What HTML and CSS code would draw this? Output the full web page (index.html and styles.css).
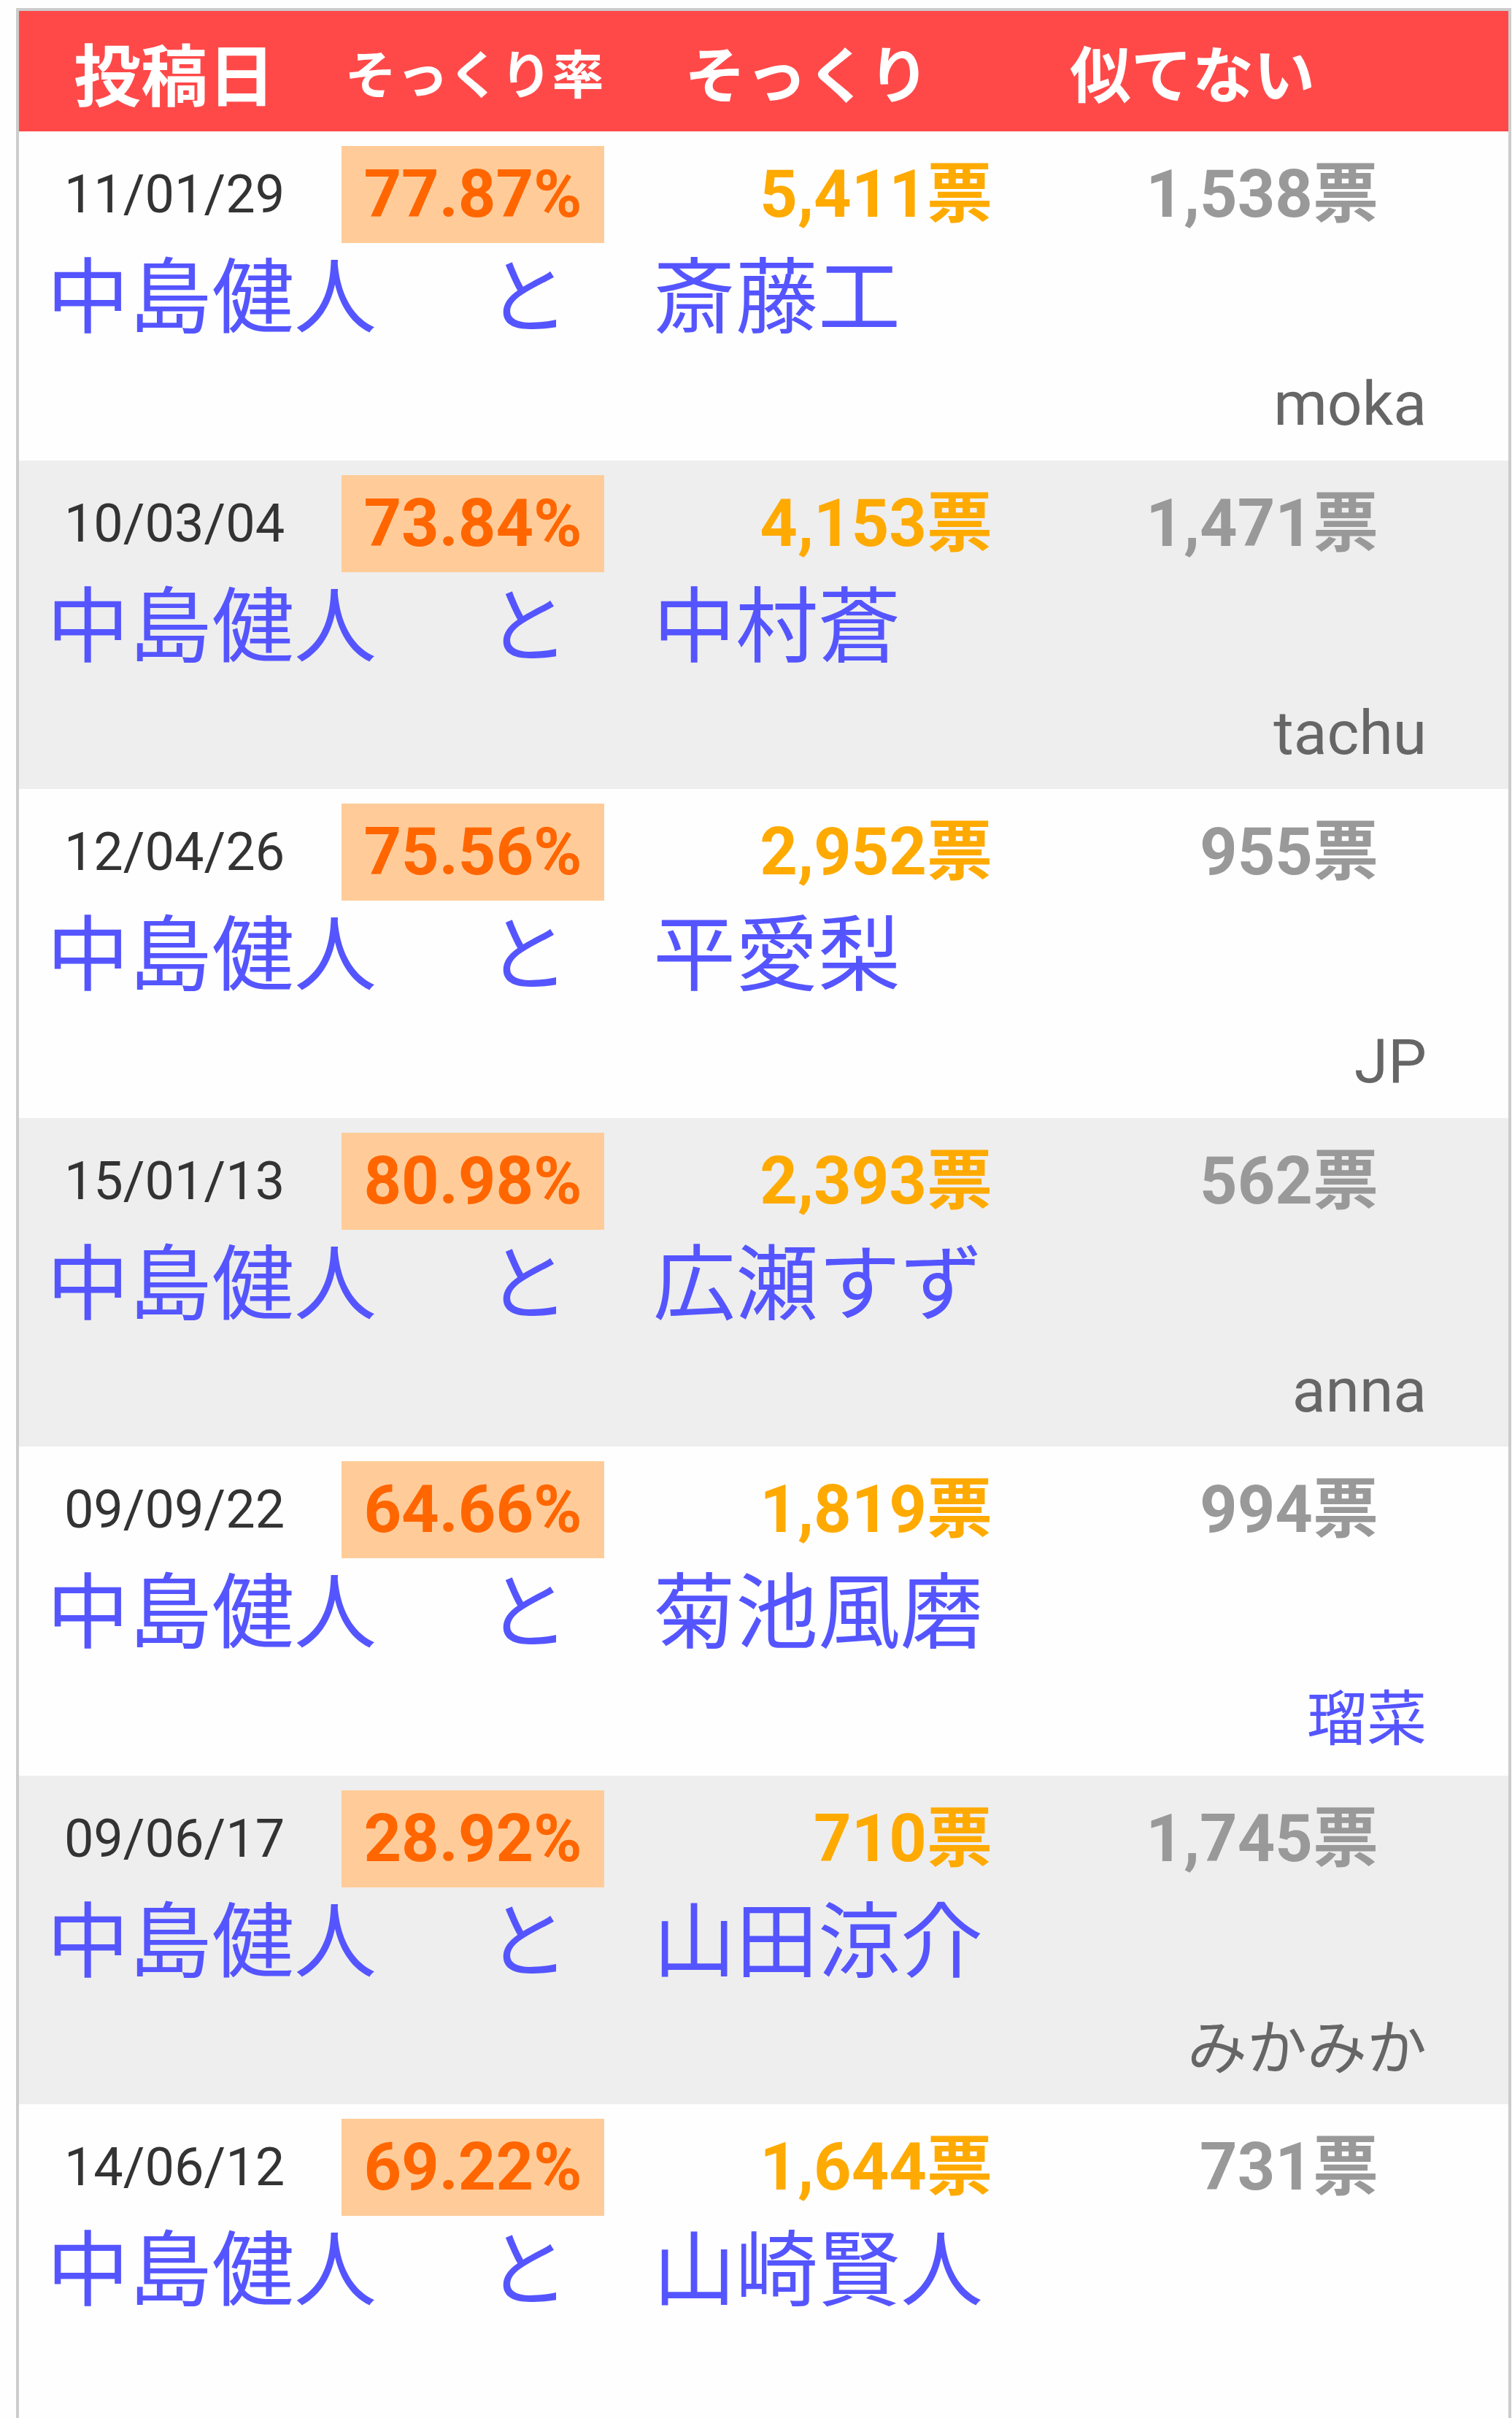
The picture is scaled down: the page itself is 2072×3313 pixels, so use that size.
FILE: index.html
```html
<!DOCTYPE html>
<html>
<head>
    <meta charset="utf-8">
    <title>そっくりランキング</title>
    <link rel="stylesheet" href="styles.css">
</head>
<body>
    <div class="board">
        <div class="head">
            <div class="h-date">投稿日</div>
            <div class="h-rate">そっくり率</div>
            <div class="h-yes">そっくり</div>
            <div class="h-no">似てない</div>
        </div>

        <div class="row">
            <div class="stats">
                <div class="date">11/01/29</div>
                <div class="rate">77.87%</div>
                <div class="yes">5,411票</div>
                <div class="no">1,538票</div>
            </div>
            <div class="pair"><span class="a">中島健人</span><span>と</span><span>斎藤工</span></div>
            <div class="user">moka</div>
        </div>

        <div class="row">
            <div class="stats">
                <div class="date">10/03/04</div>
                <div class="rate">73.84%</div>
                <div class="yes">4,153票</div>
                <div class="no">1,471票</div>
            </div>
            <div class="pair"><span class="a">中島健人</span><span>と</span><span>中村蒼</span></div>
            <div class="user">tachu</div>
        </div>

        <div class="row">
            <div class="stats">
                <div class="date">12/04/26</div>
                <div class="rate">75.56%</div>
                <div class="yes">2,952票</div>
                <div class="no">955票</div>
            </div>
            <div class="pair"><span class="a">中島健人</span><span>と</span><span>平愛梨</span></div>
            <div class="user">JP</div>
        </div>

        <div class="row">
            <div class="stats">
                <div class="date">15/01/13</div>
                <div class="rate">80.98%</div>
                <div class="yes">2,393票</div>
                <div class="no">562票</div>
            </div>
            <div class="pair"><span class="a">中島健人</span><span>と</span><span>広瀬すず</span></div>
            <div class="user">anna</div>
        </div>

        <div class="row">
            <div class="stats">
                <div class="date">09/09/22</div>
                <div class="rate">64.66%</div>
                <div class="yes">1,819票</div>
                <div class="no">994票</div>
            </div>
            <div class="pair"><span class="a">中島健人</span><span>と</span><span>菊池風磨</span></div>
            <div class="user cjk link">瑠菜</div>
        </div>

        <div class="row">
            <div class="stats">
                <div class="date">09/06/17</div>
                <div class="rate">28.92%</div>
                <div class="yes">710票</div>
                <div class="no">1,745票</div>
            </div>
            <div class="pair"><span class="a">中島健人</span><span>と</span><span>山田涼介</span></div>
            <div class="user cjk">みかみか</div>
        </div>

        <div class="row">
            <div class="stats">
                <div class="date">14/06/12</div>
                <div class="rate">69.22%</div>
                <div class="yes">1,644票</div>
                <div class="no">731票</div>
            </div>
            <div class="pair"><span class="a">中島健人</span><span>と</span><span>山崎賢人</span></div>
            <div class="user"></div>
        </div>
    </div>
</body>
</html>
```

FILE: styles.css
```css
body {
    margin: 0;
    background-color: #fefefe;
    font-family: Roboto, "Noto Sans CJK JP", sans-serif;
}
.board {
    width: 2041px;
    margin: 11px 0 0 22px;
    border: 4px solid #ccc;
    border-bottom: none;
}
.head {
    display: grid;
    grid-template-columns: 422px 404px 508px 548px 1fr;
    align-items: center;
    height: 165px;
    background-color: #ff4949;
    color: #fff;
    font-family: "Noto Sans CJK JP", sans-serif;
    font-weight: bold;
    text-align: center;
    line-height: 1;
}
.h-date {
    font-size: 92px;
    padding-left: 4px;
}
.h-rate {
    font-size: 71px;
}
.h-yes, .h-no {
    font-size: 84px;
}
.row {
    display: flex;
    flex-direction: column;
    height: 450.5px;
    background-color: #fefefe;
}
.row:nth-child(odd) {
    background-color: #eee;
}
.stats {
    display: grid;
    grid-template-columns: 422px 404px 508px 548px;
    margin-top: 20px;
    height: 133px;
    line-height: 133px;
}
.date {
    font-size: 72px;
    color: #333;
    text-align: center;
    padding-left: 4px;
}
.rate {
    justify-self: center;
    width: 360px;
    margin-left: -4px;
    background-color: #ffcc99;
    color: #ff6600;
    font-size: 90px;
    font-weight: bold;
    text-align: center;
}
.yes, .no {
    font-size: 90px;
    font-weight: bold;
    text-align: right;
}
.yes {
    color: #ffaa00;
}
.no {
    padding-right: 19px;
    color: #999;
}
.pair {
    display: grid;
    grid-template-columns: 641px 228px 1fr;
    margin-top: 10px;
    font-family: "Noto Sans CJK JP", sans-serif;
    font-size: 113px;
    line-height: 110px;
    color: #5555ff;
}
.pair .a {
    padding-left: 38px;
}
.user {
    margin-top: 51px;
    padding-right: 112px;
    font-size: 84px;
    line-height: 100px;
    color: #666;
    text-align: right;
}
.user.cjk {
    font-size: 82px;
}
.user.link {
    color: #5555ff;
}
```
